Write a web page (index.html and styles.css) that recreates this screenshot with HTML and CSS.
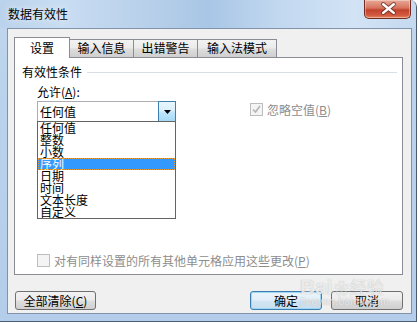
FILE: index.html
```html
<!DOCTYPE html>
<html lang="zh-CN">
<head>
    <meta charset="UTF-8">
    <title>数据有效性</title>
    <link rel="stylesheet" href="styles.css">
</head>
<body>
    <div class="window">
        <div class="titlebar">
            <span class="title">数据有效性</span>
            <div class="close">
                <svg width="47" height="19" viewBox="0 0 47 19">
                    <path d="M19 4 L30 13 M30 4 L19 13" stroke="#5a2620" stroke-width="4.5" stroke-linecap="round" opacity="0.7"/>
                    <path d="M19 4 L30 13 M30 4 L19 13" stroke="#fff" stroke-width="2.6" stroke-linecap="round"/>
                </svg>
            </div>
        </div>

        <div class="client">
            <div class="tabs">
                <div class="tab active">设置</div>
                <div class="tab w65">输入信息</div>
                <div class="tab w65">出错警告</div>
                <div class="tab w80">输入法模式</div>
            </div>

            <div class="panel">
                <div class="group-title">
                    <span>有效性条件</span>
                    <i class="rule"></i>
                </div>

                <div class="criteria">
                    <div class="allow">
                        <div class="label">允许(<u>A</u>):</div>
                        <div class="combo">
                            <span>任何值</span>
                            <span class="drop">
                                <svg width="7" height="4" viewBox="0 0 7 4"><path d="M0 0 H7 L3.5 4 Z" fill="#000"/></svg>
                            </span>
                            <ul class="list">
                                <li>任何值</li>
                                <li>整数</li>
                                <li>小数</li>
                                <li class="sel">序列</li>
                                <li>日期</li>
                                <li>时间</li>
                                <li>文本长度</li>
                                <li>自定义</li>
                            </ul>
                        </div>
                    </div>
                    <div class="check ignore">
                        <span class="box">
                            <svg width="11" height="11" viewBox="0 0 11 11"><path d="M2 5.5 L4.5 8 L9 2" stroke="#b4b4b4" stroke-width="1.6" fill="none"/></svg>
                        </span>
                        <span>忽略空值(<u>B</u>)</span>
                    </div>
                </div>

                <div class="check bottom">
                    <span class="box"></span>
                    <span>对有同样设置的所有其他单元格应用这些更改(<u>P</u>)</span>
                </div>
            </div>

            <div class="buttons">
                <div class="btn clear">全部清除(<u>C</u>)</div>
                <div class="btn ok">确定</div>
                <div class="btn cancel">取消</div>
            </div>
        </div>

        <!-- watermark from the original screenshot -->
        <div class="watermark">
            <span class="wm-big">Bai</span><span class="wm-paw">❀</span><span class="wm-cn">经验</span>
            <div class="wm-url">jingyan.baidu.com</div>
        </div>
    </div>
</body>
</html>
```

FILE: styles.css
```css
* {
    box-sizing: border-box;
}

body {
    margin: 0;
    background: #fff;
    font-family: "Noto Sans CJK SC", "Liberation Sans", sans-serif;
    font-size: 12px;
    color: #000;
}

.window {
    position: relative;
    width: 417px;
    height: 322px;
    border-right: 1px solid #4a5d73;
    border-bottom: 1px solid #4a5d73;
    border-top-right-radius: 7px;
    background: linear-gradient(to bottom, #c3d8ef 0, #bcd3ec 60px, #b3cdea 100%);
    display: flex;
    flex-direction: column;
    overflow: hidden;
}

/* Title bar */
.titlebar {
    height: 28px;
    display: flex;
    justify-content: space-between;
    padding-left: 8px;
    background: linear-gradient(90deg, #bad2eb 0%, #c9ddf2 15%, #b8d0ea 35%, #a9c6e6 50%, #c3d9f0 68%, #d2e3f5 85%, #c4d9ef 100%);
}

.title {
    line-height: 28px;
    text-shadow: 0 0 6px rgba(255, 255, 255, 0.9);
}

.close {
    width: 47px;
    height: 19px;
    margin-right: 5px;
    border: 1px solid #6e2c22;
    border-top: none;
    border-radius: 0 0 5px 5px;
    background: linear-gradient(to bottom, #e9a996 0%, #d5735d 45%, #c2422d 55%, #d45a3f 85%, #e68a60 100%);
    box-shadow: inset 0 0 0 1px rgba(255, 255, 255, 0.35);
    display: flex;
}

/* Client area */
.client {
    margin: 0 4px 0 7px;
    height: 286px;
    border: 1px solid #8193a8;
    background: #f0f0f0;
    padding: 8px 8px 0 6px;
    display: flex;
    flex-direction: column;
}

.tabs {
    display: flex;
    align-items: flex-end;
    height: 20px;
}

.tab {
    position: relative;
    height: 18px;
    margin-left: -1px;
    border: 1px solid #898c95;
    border-bottom: none;
    background: linear-gradient(to bottom, #f2f2f2 0%, #ebebeb 45%, #dddddd 55%, #cfcfcf 100%);
    text-align: center;
    line-height: 16px;
}

.tab.active {
    z-index: 1;
    width: 56px;
    height: 21px;
    margin-left: 0;
    margin-bottom: -1px;
    background: #fff;
    line-height: 20px;
}

.tab.w65 {
    width: 65px;
}

.tab.w80 {
    width: 80px;
}

.panel {
    height: 218px;
    border: 1px solid #898c95;
    background: #fff;
    padding: 7px 5px 7px 7px;
    display: flex;
    flex-direction: column;
}

.group-title {
    display: flex;
    align-items: center;
    gap: 5px;
    line-height: 14px;
}

.rule {
    flex: 1;
    height: 1px;
    background: #d5dfe5;
}

.criteria {
    display: flex;
    margin-top: 6px;
    padding-left: 15px;
}

.allow {
    width: 139px;
}

.label {
    line-height: 14px;
    margin-bottom: 2px;
}

.combo {
    position: relative;
    height: 21px;
    border: 1px solid #abadb3;
    border-right: none;
    display: flex;
    align-items: center;
    padding-left: 2px;
}

.drop {
    margin-left: auto;
    width: 18px;
    height: 21px;
    margin-top: -1px;
    margin-bottom: -1px;
    border: 1px solid #3c7fb1;
    background: linear-gradient(to bottom, #eaf6fd 0%, #d9f0fc 45%, #bee6fd 55%, #a7d9f5 100%);
    display: flex;
    align-items: center;
    justify-content: center;
}

.list {
    position: absolute;
    left: -1px;
    top: 19px;
    width: 139px;
    margin: 0;
    padding: 0;
    list-style: none;
    border: 1px solid #646464;
    background: #fff;
    z-index: 2;
}

.list li {
    height: 12px;
    line-height: 12px;
    padding-left: 2px;
}

.list li.sel {
    background: #3399ff;
    color: #fff;
    outline: 1px dotted #e59a3a;
    outline-offset: -1px;
}

/* Check boxes */
.check {
    display: flex;
    align-items: center;
    gap: 4px;
    height: 13px;
    color: #8d8d8d;
}

.box {
    width: 13px;
    height: 13px;
    border: 1px solid #bdbdbd;
    background: #f4f4f4;
    display: flex;
    align-items: center;
    justify-content: center;
}

.check.ignore {
    margin-left: 74px;
    margin-top: 18px;
}

.check.bottom {
    margin-top: auto;
    margin-left: 15px;
}

/* Dialog buttons */
.buttons {
    display: flex;
    padding: 16px 0 0 1px;
}

.btn {
    height: 19px;
    border: 1px solid #707070;
    border-radius: 3px;
    background: linear-gradient(to bottom, #f2f2f2 0%, #ebebeb 45%, #dddddd 55%, #cfcfcf 100%);
    text-align: center;
    line-height: 17px;
}

.btn.clear {
    width: 81px;
}

.btn.ok {
    width: 72px;
    margin-left: auto;
    border-color: #3c7fb1;
    box-shadow: inset 0 0 0 1px #9fd6f4;
    background: linear-gradient(to bottom, #eaf4fa 0%, #e3eff7 45%, #d3e5f2 55%, #c8def0 100%);
}

.btn.cancel {
    width: 72px;
    margin-left: 9px;
}

/* Watermark */
.watermark {
    position: absolute;
    left: 300px;
    top: 274px;
    color: rgba(255, 255, 255, 0.75);
    text-shadow: 0 0 1px rgba(110, 110, 110, 0.55);
    font-family: "Liberation Sans", sans-serif;
    pointer-events: none;
}

.wm-big {
    font-size: 21px;
    font-weight: bold;
}

.wm-paw {
    font-size: 15px;
    margin: 0 1px;
}

.wm-cn {
    font-family: "Noto Sans CJK SC", sans-serif;
    font-size: 17px;
}

.wm-url {
    margin-top: -3px;
    font-size: 10px;
    letter-spacing: 0.5px;
}
```
